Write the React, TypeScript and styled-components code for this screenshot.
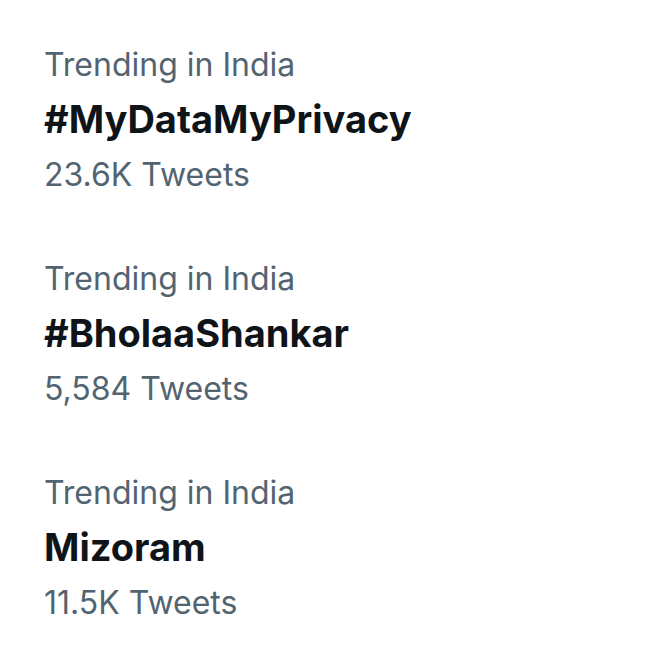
import React from 'react';
import styled, { createGlobalStyle } from 'styled-components';

const GlobalStyle = createGlobalStyle`
  html, body {
    margin: 0;
    padding: 0;
    background: #ffffff;
  }
  body {
    font-family: Inter, Roboto, "Liberation Sans", sans-serif;
    -webkit-font-smoothing: antialiased;
  }
`;

const TrendList = styled.div`
  display: flex;
  flex-direction: column;
  gap: 49px;
  padding: 37px 44px 0;
  width: 651px;
  height: 651px;
  box-sizing: border-box;
  background: #fff;
`;

const Trend = styled.div`
  display: flex;
  flex-direction: column;
`;

const Line = styled.div<{ $strong?: boolean }>`
  font-size: ${(p) => (p.$strong ? '38px' : '32px')};
  line-height: 55px;
  white-space: nowrap;
  color: ${(p) => (p.$strong ? '#0f1419' : '#536471')};
  font-weight: ${(p) => (p.$strong ? 700 : 400)};
`;

const trends = [
  { context: 'Trending in India', name: '#MyDataMyPrivacy', count: '23.6K Tweets' },
  { context: 'Trending in India', name: '#BholaaShankar', count: '5,584 Tweets' },
  { context: 'Trending in India', name: 'Mizoram', count: '11.5K Tweets' },
];

export default function App() {
  return (
    <>
      <GlobalStyle />
      <TrendList>
        {trends.map((t) => (
          <Trend key={t.name}>
            <Line>{t.context}</Line>
            <Line $strong>{t.name}</Line>
            <Line>{t.count}</Line>
          </Trend>
        ))}
      </TrendList>
    </>
  );
}
